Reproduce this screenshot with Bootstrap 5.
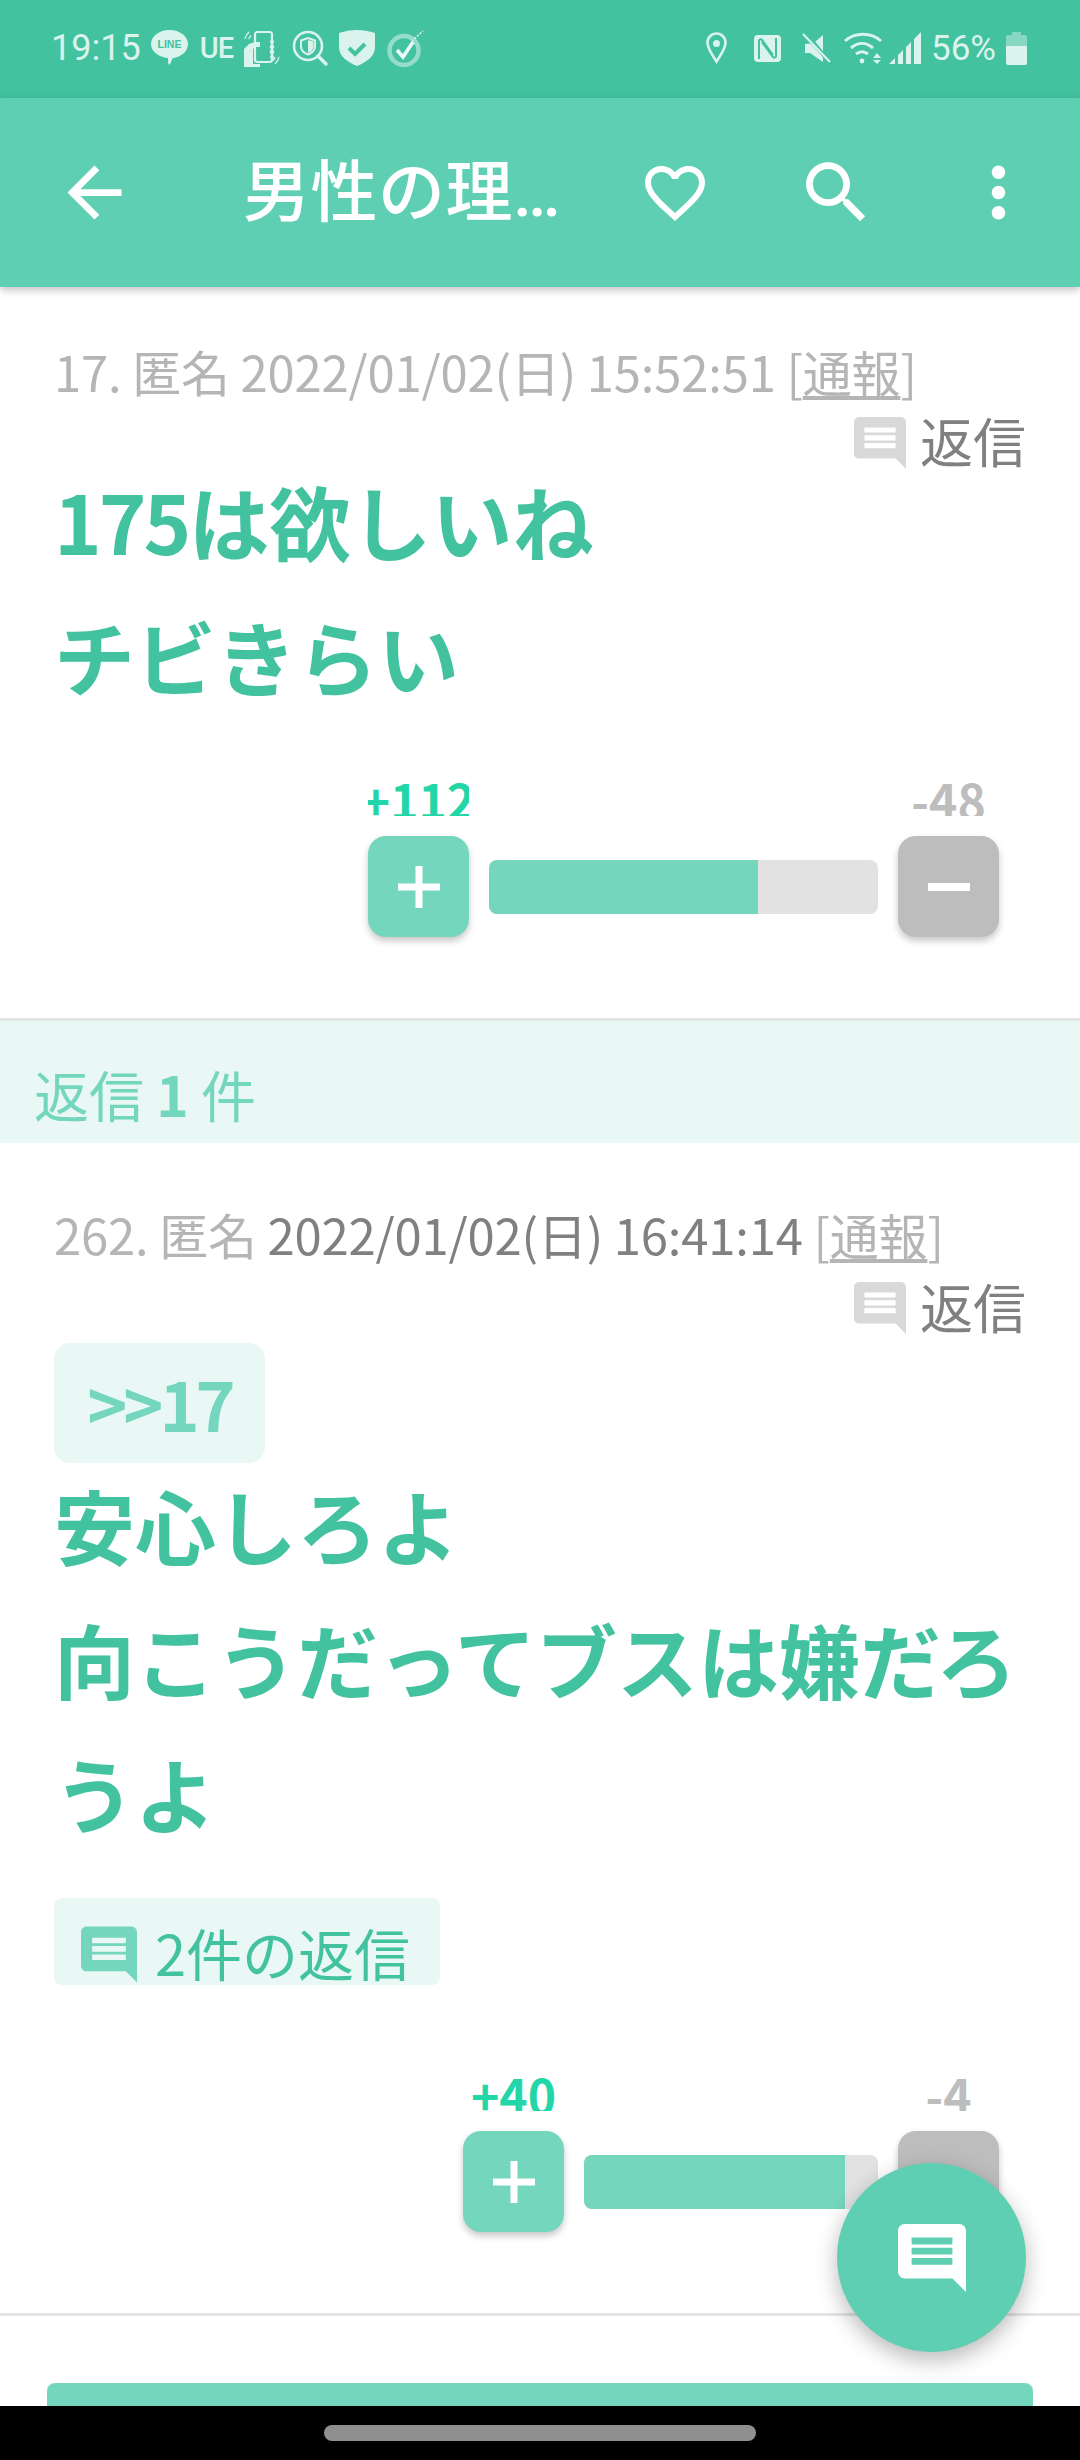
<!DOCTYPE html>
<html lang="ja">
<head>
<meta charset="utf-8">
<title>男性の理想の身長</title>
<link href="https://cdn.jsdelivr.net/npm/bootstrap@5.3.0/dist/css/bootstrap.min.css" rel="stylesheet">
<style>
html,body{margin:0;background:#fff}
body{font-family:"Noto Sans CJK JP","Noto Sans CJK SC",sans-serif}
.screen{width:1080px;height:2460px;overflow:hidden;position:relative}
.statusrow{height:98px;background:#43c2a0;color:#daf3ed;padding:0 53px 2px 51px;font-family:Roboto,sans-serif;font-size:35px;flex:none}
.statusrow svg{display:block;flex:none}
.st-left{gap:11.500px}
.st-time{font-size:36px;margin-right:-1px}
.st-ue{font-weight:500;font-size:29px;letter-spacing:-1px;width:33px;line-height:1}
.appbar{height:189px;background:#5fcfb3;flex:none;padding:0 41px 0 54px;box-shadow:0 3px 8px rgba(0,0,0,.25);z-index:2;color:#fff}
.appbar svg{display:block;fill:#fff;flex:none}
.apptitle{width:328px;margin-left:108px;font-family:Roboto,"Noto Sans CJK JP",sans-serif;font-size:67px;font-weight:500;line-height:90px;letter-spacing:.5px}
.appicons{gap:81px}
.heartgap{margin-right:4px}
.feed{flex:1 1 auto;min-height:0;overflow:hidden}
.entry{border-bottom:3px solid #e5e5e5;padding:47px 54px 81px}
.entry-two{padding-top:54px}
.metaline{font-size:49px;line-height:73px;height:73px;color:#b5b5b5;white-space:nowrap;letter-spacing:-.2px}
.metaline u{text-underline-offset:4px}
.metadate{color:#808080}
.replyrow{height:66px;font-size:53px;line-height:66px;color:#808080;gap:14px}
.replyrow svg{width:52px;height:52px;fill:#d9d9d9;margin-top:10px}
.entry-two .replyrow{height:73px;line-height:72px}
.entry-two .replyrow svg{margin-top:12px}
.overlapper{margin-bottom:-21px}
.bodytext{font-size:81px;line-height:135px;font-weight:700;color:#43c2a0}
.entry-two .bodytext{line-height:134px}
.digits{letter-spacing:-3px}
.quotebox{width:211px;height:120px;background:#e9f8f5;border-radius:16px;color:#74d6bc;font-size:68px;font-weight:700;line-height:120px;text-align:center;letter-spacing:-4px;margin-bottom:-6px}
.replycount{width:386px;height:87px;margin-top:39px;background:#e9f8f5;border-radius:8px;padding-left:27px;color:#43c2a0;font-size:56px;line-height:87px;gap:18px;overflow:hidden}
.replycount svg{width:56px;height:57px;fill:#74d6bc;margin-top:28px;flex:none}
.replycount span{margin-top:10px;white-space:nowrap}
.votes{padding-right:27px;gap:20px}
.votes-one{margin-top:54px}
.votes-two{margin-top:86px}
.votecol{width:101px}
.votenum{height:40px;line-height:46px;overflow:hidden;font-size:48px;font-weight:700;text-align:center;white-space:nowrap;margin-bottom:20px;display:flex;justify-content:center}
.votenum-up{color:#22d6a8}
.votenum-down{color:#bdbdbd}
.votebtn{width:101px;height:101px;border-radius:18px;box-shadow:0 4px 7px rgba(0,0,0,.22);display:flex;align-items:center;justify-content:center}
.votebtn-up{background:#74d6bc}
.votebtn-down{background:#bdbdbd}
.votebar{height:54px;margin-top:84px;background:#e2e2e2;border-radius:8px;overflow:hidden}
.votefill{height:100%;background:#74d6bc}
.section-head{height:122px;background:#e9f8f5;color:#74d6bc;font-size:55px;padding:40px 0 0 34px;line-height:64px}
.morebtn{height:90px;margin:67px 47px 0;background:#74d6bc;border-radius:8px}
.fab{position:absolute;left:837px;top:2163px;width:189px;height:189px;border-radius:50%;background:#5fcfb3;box-shadow:0 8px 22px rgba(0,0,0,.28);z-index:3;display:flex;align-items:center;justify-content:center}
.fab svg{width:68px;height:68px;fill:#fff;display:block}
.navstrip{height:54px;background:#000;flex:none;z-index:2}
.navpill{width:432px;height:16px;border-radius:8px;background:#8e8e8e}
</style>
</head>
<body>
<div class="screen d-flex flex-column">

  <div class="statusrow d-flex align-items-center justify-content-between">
    <div class="d-flex align-items-center st-left">
      <span class="st-time">19:15</span>
      <svg width="37" height="36" viewBox="0 0 37 36"><path fill="#daf3ed" d="M18.500 0C28.700 0 37 6.300 37 14.100c0 7-6.500 12.700-14 14-1.800.3-2 1-3 4-.6 2-2.200 3.300-2.600 1.800-.3-1.200-.2-3.500-.5-5.800C7.800 27.300 0 21.600 0 14.100 0 6.300 8.300 0 18.500 0z"/><text x="18.500" y="18" text-anchor="middle" font-family="Liberation Sans" font-weight="700" font-size="10.500" fill="#43c2a0">LINE</text></svg>
      <span class="st-ue">UE</span>
      <svg width="36" height="37" viewBox="0 0 36 37" fill="none" stroke="#daf3ed"><rect x="11" y="2" width="17" height="30" rx="2.500" stroke-width="2.200"/><path fill="#daf3ed" stroke="none" d="M0 37V19l5-5 6-2h5v5h-5l-2 2v15h7v3z"/><g fill="#daf3ed" stroke="none"><circle cx="28" cy="12" r="2"/><circle cx="28" cy="17" r="2.300"/><circle cx="28" cy="22" r="2.300"/><circle cx="28" cy="27" r="2"/></g><path stroke-width="1.300" d="M1 9c.5-3 2-5 4-7M5 9c.3-1.500 1-2.500 2-3.500M35 27c-.4 3-2 5-4 7M31 27c-.3 1.500-1 2.500-2 3.500"/></svg>
      <svg width="36" height="37" viewBox="0 0 36 37" fill="none" stroke="#daf3ed"><circle cx="16" cy="16" r="14" stroke-width="2.600"/><path stroke-width="3.400" stroke-linecap="round" d="M26 26l8 8"/><path stroke-width="2" d="M16 8l7 2.500v6c0 4-3 6.500-7 8-4-1.500-7-4-7-8v-6z"/><path fill="#daf3ed" stroke="none" d="M16 10v13c3-1.200 5.500-3.500 5.500-6.500v-5z"/></svg>
      <svg width="36" height="36" viewBox="0 0 36 36"><path fill="#daf3ed" d="M18 0c6 0 12 1 18 3v14c0 9-8 15-18 19C8 32 0 26 0 17V3c6-2 12-3 18-3z"/><path fill="none" stroke="#43c2a0" stroke-width="4" d="M10 18l6 6 10-10"/></svg>
      <svg width="37" height="39" viewBox="0 0 37 39" fill="none"><circle cx="17" cy="21.500" r="14.500" stroke="#daf3ed" stroke-width="4.500" opacity=".55"/><path stroke="#fff" stroke-width="3.600" d="M10 21l6 7 10-15" opacity=".9"/><path stroke="#daf3ed" stroke-width="1.600" stroke-dasharray="2 1.500" d="M25 12L36 2"/></svg>
    </div>
    <div class="d-flex align-items-center">
      <svg width="21" height="32" viewBox="0 0 21 32" style="margin-right:27px"><path fill="none" stroke="#daf3ed" stroke-width="2.600" d="M10.500 1.500a9 9 0 0 1 9 9.300c0 6-5 12.500-9 18.700-4-6.200-9-12.700-9-18.700a9 9 0 0 1 9-9.300z"/><circle cx="10.500" cy="11.500" r="3.500" fill="#daf3ed"/></svg>
      <svg width="27" height="27" viewBox="0 0 27 27" style="margin-right:21px"><rect width="27" height="27" rx="4" fill="#daf3ed"/><path fill="none" stroke="#43c2a0" stroke-width="2" d="M5 24V6c0-2 2-2 3-1l11 15M22 3v18c0 2-2 2-3 1L8 7"/></svg>
      <svg width="29" height="30" viewBox="0 0 29 30" style="margin-right:13px"><path fill="#daf3ed" d="M3 11h5l2.500 0L21 2v22L8 10.500 3 11zM3 11v9h5l13 9v-5L9 11z"/><path stroke="#43c2a0" stroke-width="4" d="M2-2l26 32"/><path stroke="#daf3ed" stroke-width="2.200" d="M1 1l27 28"/></svg>
      <svg width="38" height="32" viewBox="0 0 38 32" fill="none" stroke="#daf3ed" stroke-width="3" style="margin-right:7px"><path d="M1 9c10-9 26-9 36 0M7 16c7-6 15-6 22 0M12 22c4-3 8-3 12 0"/><circle cx="18" cy="29" r="2.400" fill="#daf3ed" stroke="none"/><path fill="#daf3ed" stroke="none" d="M33 21l4 5h-8zM29 28h8l-4 4z"/></svg>
      <svg width="32" height="32" viewBox="0 0 32 32" style="margin-right:10px"><path fill="#daf3ed" d="M0 32l6-6v6zM9 23l5-5v14H9zM17 15l5-5v22h-5zM25 7l7-7v32h-7z"/></svg>
      <span style="margin-right:10px;line-height:1">56%</span>
      <svg width="21" height="33" viewBox="0 0 21 33"><path fill="#daf3ed" opacity=".45" d="M6 0h9v3h4a2 2 0 0 1 2 2v9H0V5a2 2 0 0 1 2-2h4z"/><path fill="#daf3ed" d="M0 14h21v17a2 2 0 0 1-2 2H2a2 2 0 0 1-2-2z"/></svg>
    </div>
  </div>

  <div class="appbar d-flex align-items-center">
    <svg width="81" height="81" viewBox="0 0 24 24"><path d="M20 11H7.830l5.590-5.590L12 4l-8 8 8 8 1.410-1.410L7.830 13H20v-2z"/></svg>
    <div class="apptitle text-truncate">男性の理想の身長</div>
    <div class="appicons d-flex align-items-center ms-auto">
      <svg class="heartgap" width="72" height="72" viewBox="0 0 24 24"><path d="M16.500 3c-1.740 0-3.410.81-4.500 2.090C10.910 3.810 9.240 3 7.500 3 4.420 3 2 5.420 2 8.500c0 3.780 3.400 6.860 8.550 11.540L12 21.350l1.450-1.320C18.600 15.360 22 12.280 22 8.500 22 5.420 19.580 3 16.500 3zm-4.400 15.550l-.1.100-.1-.1C7.140 14.240 4 11.390 4 8.500 4 6.500 5.500 5 7.500 5c1.540 0 3.040.99 3.570 2.360h1.870C13.460 5.990 14.960 5 16.500 5c2 0 3.500 1.500 3.500 3.500 0 2.890-3.140 5.740-7.900 10.050z"/></svg>
      <svg width="81" height="81" viewBox="0 0 24 24"><path d="M15.500 14h-.79l-.28-.27C15.410 12.590 16 11.110 16 9.500 16 5.910 13.090 3 9.500 3S3 5.910 3 9.500 5.910 16 9.500 16c1.610 0 3.090-.59 4.230-1.570l.27.28v.79l5 4.990L20.490 19l-4.990-5zm-6 0C7.010 14 5 11.990 5 9.500S7.010 5 9.500 5 14 7.010 14 9.500 11.990 14 9.500 14z"/></svg>
      <svg width="81" height="81" viewBox="0 0 24 24"><path d="M12 8c1.100 0 2-.9 2-2s-.9-2-2-2-2 .9-2 2 .9 2 2 2zm0 2c-1.100 0-2 .9-2 2s.9 2 2 2 2-.9 2-2-.9-2-2-2zm0 6c-1.100 0-2 .9-2 2s.9 2 2 2 2-.9 2-2-.9-2-2-2z"/></svg>
    </div>
  </div>

  <div class="feed">
    <article class="entry">
      <div class="metaline">17. 匿名 2022/01/02(日) 15:52:51 [<u>通報</u>]</div>
      <div class="replyrow overlapper d-flex justify-content-end">
        <svg viewBox="2 2 20 20"><path d="M21.990 4c0-1.100-.89-2-1.990-2H4c-1.100 0-2 .9-2 2v12c0 1.100.9 2 2 2h14l4 4-.01-18zM18 14H6v-2h12v2zm0-3H6V9h12v2zm0-3H6V6h12v2z"/></svg>
        <span>返信</span>
      </div>
      <div class="bodytext"><span class="digits">175</span>は欲しいね<br>チビきらい</div>
      <div class="votes votes-one d-flex justify-content-end">
        <div class="votecol">
          <div class="votenum votenum-up">+112</div>
          <div class="votebtn votebtn-up"><svg width="42" height="42" viewBox="0 0 42 42"><path fill="#fff" d="M17.500 0h7v17.500H42v7H24.500V42h-7V24.500H0v-7h17.500z"/></svg></div>
        </div>
        <div class="votebar" style="width:389px"><div class="votefill" style="width:69.200%"></div></div>
        <div class="votecol">
          <div class="votenum votenum-down">-48</div>
          <div class="votebtn votebtn-down"><svg width="42" height="8" viewBox="0 0 42 8"><rect width="42" height="8" fill="#fff"/></svg></div>
        </div>
      </div>
    </article>

    <div class="section-head">返信 <b>1</b> 件</div>

    <article class="entry entry-two">
      <div class="metaline">262. 匿名 <span class="metadate">2022/01/02(日) 16:41:14</span> [<u>通報</u>]</div>
      <div class="replyrow d-flex justify-content-end">
        <svg viewBox="2 2 20 20"><path d="M21.990 4c0-1.100-.89-2-1.990-2H4c-1.100 0-2 .9-2 2v12c0 1.100.9 2 2 2h14l4 4-.01-18zM18 14H6v-2h12v2zm0-3H6V9h12v2zm0-3H6V6h12v2z"/></svg>
        <span>返信</span>
      </div>
      <div class="quotebox">&gt;&gt;17</div>
      <div class="bodytext">安心しろよ<br>向こうだってブスは嫌だろうよ</div>
      <div class="replycount d-flex">
        <svg viewBox="2 2 20 20"><path d="M21.990 4c0-1.100-.89-2-1.990-2H4c-1.100 0-2 .9-2 2v12c0 1.100.9 2 2 2h14l4 4-.01-18zM18 14H6v-2h12v2zm0-3H6V9h12v2zm0-3H6V6h12v2z"/></svg>
        <span>2件の返信</span>
      </div>
      <div class="votes votes-two d-flex justify-content-end">
        <div class="votecol">
          <div class="votenum votenum-up">+40</div>
          <div class="votebtn votebtn-up"><svg width="42" height="42" viewBox="0 0 42 42"><path fill="#fff" d="M17.500 0h7v17.500H42v7H24.500V42h-7V24.500H0v-7h17.500z"/></svg></div>
        </div>
        <div class="votebar" style="width:294px"><div class="votefill" style="width:88.800%"></div></div>
        <div class="votecol">
          <div class="votenum votenum-down">-4</div>
          <div class="votebtn votebtn-down"></div>
        </div>
      </div>
    </article>

    <div class="morebtn"></div>
  </div>

  <div class="navstrip d-flex align-items-center justify-content-center"><div class="navpill"></div></div>

  <div class="fab"><svg viewBox="2 2 20 20"><path d="M21.990 4c0-1.100-.89-2-1.990-2H4c-1.100 0-2 .9-2 2v12c0 1.100.9 2 2 2h14l4 4-.01-18zM18 14H6v-2h12v2zm0-3H6V9h12v2zm0-3H6V6h12v2z"/></svg></div>
</div>
<script src="https://cdn.jsdelivr.net/npm/bootstrap@5.3.0/dist/js/bootstrap.bundle.min.js"></script>
</body>
</html>
